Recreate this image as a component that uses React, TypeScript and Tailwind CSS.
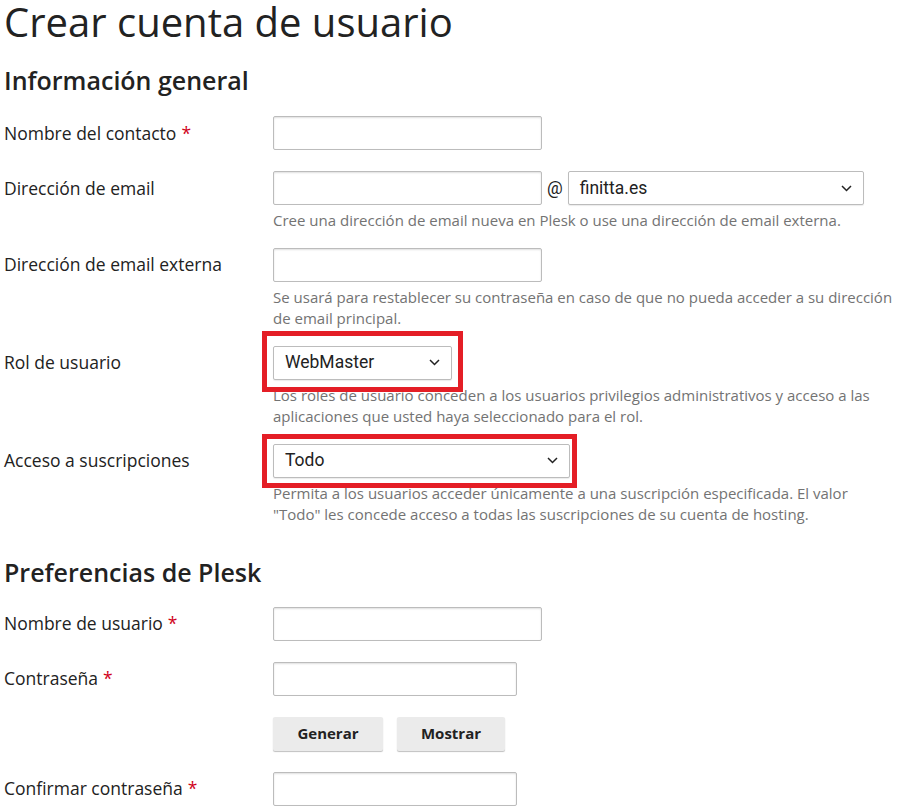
import { ReactNode } from "react";

const sans = "font-['Open_Sans','Noto_Sans',sans-serif]";
const ctrl = "font-['Roboto','Liberation_Sans',sans-serif]";

function Req() {
  return <span className="ml-[5px] text-[#d0021b]">*</span>;
}

function TextInput({ w = "w-[269px]" }: { w?: string }) {
  return (
    <input
      type="text"
      className={`${w} h-[34px] rounded-[2px] border border-[#bcbcbc] bg-white px-2 shadow-[inset_0_1px_2px_rgba(0,0,0,0.13)] outline-none`}
    />
  );
}

function Select({ value, w }: { value: string; w: string }) {
  return (
    <div
      className={`${w} ${ctrl} flex h-[34px] items-center justify-between rounded-[2px] border border-[#bcbcbc] bg-white pl-[11px] pr-[11px] text-[17.5px] text-[#222] shadow-[0_1px_1px_rgba(0,0,0,0.08)]`}
    >
      <span>{value}</span>
      <svg width="11" height="7" viewBox="0 0 11 7" fill="none">
        <path d="M1 1l4.5 4.5L10 1" stroke="#222" strokeWidth="1.5" />
      </svg>
    </div>
  );
}

// red highlight drawn on top of the screenshot
function Marked({ children, className }: { children: ReactNode; className: string }) {
  return (
    <div className="relative w-max">
      {children}
      <span className={`pointer-events-none absolute border-[5px] border-[#e41e26] ${className}`} />
    </div>
  );
}

function Row({
  label,
  required,
  hint,
  children,
}: {
  label: string;
  required?: boolean;
  hint?: ReactNode;
  children: ReactNode;
}) {
  return (
    <div className={`grid grid-cols-[269px_1fr] ${hint ? "mb-[16px]" : "mb-[21px]"}`}>
      <div className="flex h-[34px] items-center text-[17.5px] text-[#222]">
        {label}
        {required && <Req />}
      </div>
      <div>
        {children}
        {hint && (
          <p className="mt-[5px] w-[621px] text-[15px] leading-[21.5px] text-[#737373]">{hint}</p>
        )}
      </div>
    </div>
  );
}

export default function App() {
  return (
    <div className={`${sans} min-h-screen bg-white pl-[4px] text-[#222]`}>
      <h1 className="text-[40px] font-normal leading-[43px] text-[#222]">Crear cuenta de usuario</h1>
      <h2 className="mt-[22px] mb-[21px] text-[25px] font-semibold leading-[30px]">Información general</h2>

      <Row label="Nombre del contacto" required>
        <TextInput />
      </Row>
      <Row
        label="Dirección de email"
        hint="Cree una dirección de email nueva en Plesk o use una dirección de email externa."
      >
        <div className="flex items-center">
          <TextInput />
          <span className={`${ctrl} mx-[5px] text-[17.5px] text-[#222]`}>@</span>
          <Select value="finitta.es" w="w-[296px]" />
        </div>
      </Row>
      <Row
        label="Dirección de email externa"
        hint="Se usará para restablecer su contraseña en caso de que no pueda acceder a su dirección de email principal."
      >
        <TextInput />
      </Row>
      <Row
        label="Rol de usuario"
        hint="Los roles de usuario conceden a los usuarios privilegios administrativos y acceso a las aplicaciones que usted haya seleccionado para el rol."
      >
        <Marked className="-left-[11px] -top-[15px] -right-[11px] -bottom-[12px]">
          <Select value="WebMaster" w="w-[179px]" />
        </Marked>
      </Row>
      <Row
        label="Acceso a suscripciones"
        hint={'Permita a los usuarios acceder únicamente a una suscripción especificada. El valor "Todo" les concede acceso a todas las suscripciones de su cuenta de hosting.'}
      >
        <Marked className="-left-[11px] -top-[10px] -right-[7px] -bottom-[10px]">
          <Select value="Todo" w="w-[297px]" />
        </Marked>
      </Row>

      <h2 className="mt-[31px] mb-[20px] text-[25px] font-semibold leading-[30px]">Preferencias de Plesk</h2>

      <Row label="Nombre de usuario" required>
        <TextInput />
      </Row>
      <Row label="Contraseña" required>
        <TextInput w="w-[244px]" />
      </Row>
      <div className="mb-[21px] grid grid-cols-[269px_1fr]">
        <div />
        <div className="flex gap-[14px]">
          <button className="h-[34px] w-[110px] rounded-[2px] bg-[#ebebeb] text-[15px] font-bold text-[#222] shadow-[0_1px_1px_rgba(0,0,0,0.25)]">
            Generar
          </button>
          <button className="h-[34px] w-[108px] rounded-[2px] bg-[#ebebeb] text-[15px] font-bold text-[#222] shadow-[0_1px_1px_rgba(0,0,0,0.25)]">
            Mostrar
          </button>
        </div>
      </div>
      <Row label="Confirmar contraseña" required>
        <TextInput w="w-[244px]" />
      </Row>
    </div>
  );
}
